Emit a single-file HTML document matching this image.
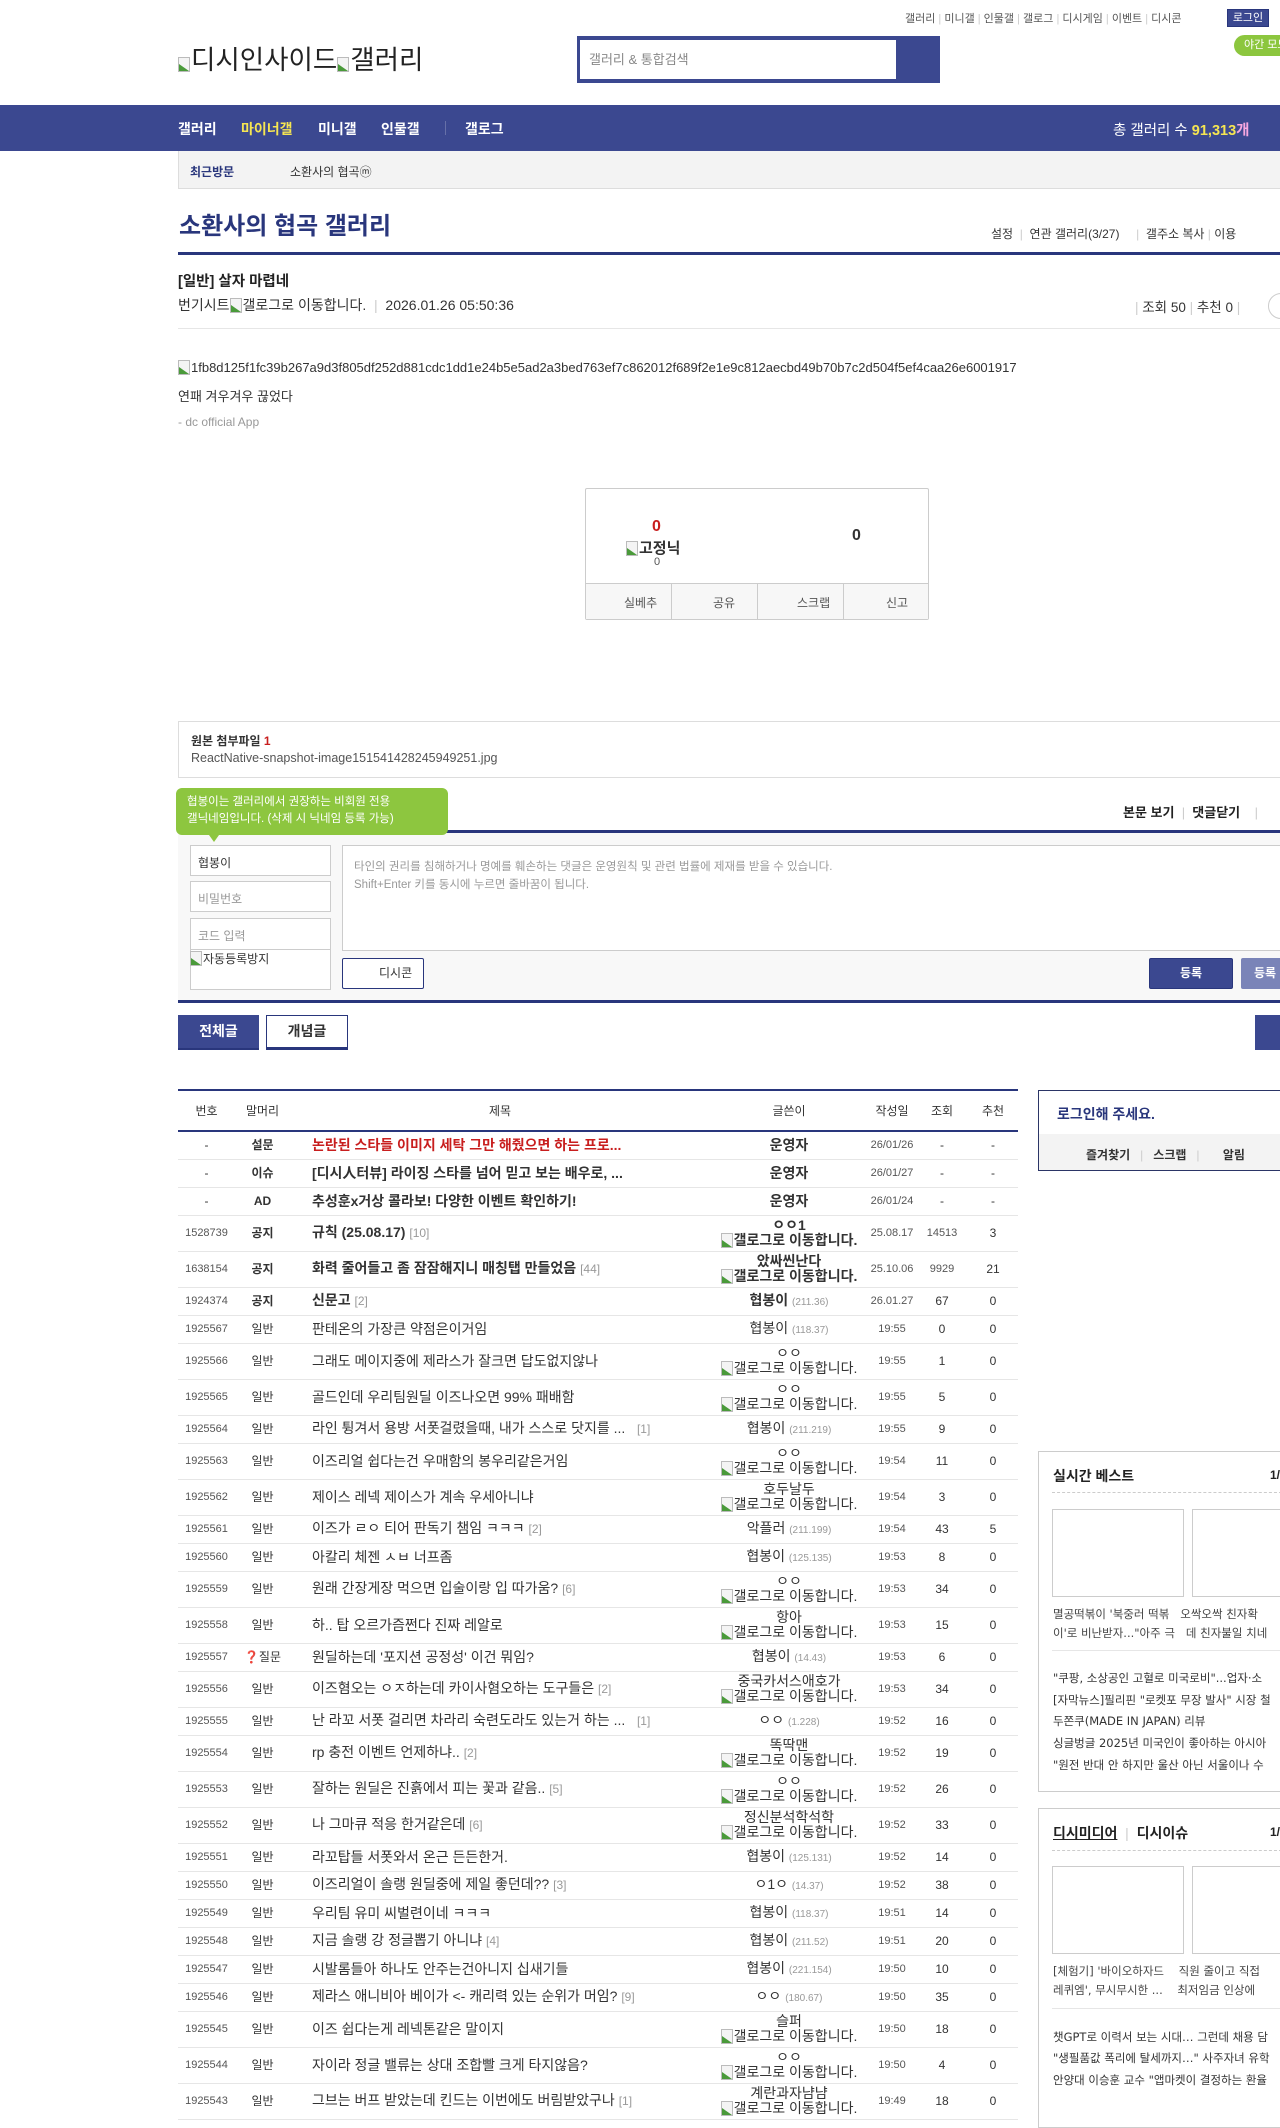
<!DOCTYPE html>
<html><head><meta charset="utf-8">
<style>
*{margin:0;padding:0;box-sizing:border-box}
body{width:1280px;height:2112px;position:relative;overflow:hidden;background:#fff;font-family:"Liberation Sans","Noto Sans CJK KR",sans-serif;color:#333;font-size:12px}
.a{position:absolute;white-space:nowrap}
.bi{display:inline-block;width:12px;height:15px;vertical-align:-3px;position:relative;border:1px solid #bbb;background:#f4f4f4;margin-right:1px}
.bi:after{content:"";position:absolute;left:0;bottom:0;width:0;height:0;border-left:10px solid #4a9a3a;border-top:7px solid transparent}
.nav span{color:#fff;font-weight:bold;font-size:14px}
table{border-collapse:collapse;table-layout:fixed;position:absolute;left:178px;top:1089px;width:840px}
td{border-bottom:1px solid #e6e6e6;text-align:center;font-size:12px;color:#333;line-height:15px;white-space:nowrap;overflow:hidden}
td.t{text-align:left;padding-left:22px;font-size:14px}
td.n{font-size:11px;color:#555}
tr.s td{height:28px}
tr.d td{height:36px}
.ip{color:#999;font-size:10px}
.rp{color:#999;font-size:12px}
.w{font-size:14px}
.gl{font-size:14px}
th{height:41px;font-weight:normal;font-size:12px;color:#333;border-top:2px solid #29367c;border-bottom:2px solid #29367c}
.sb{position:absolute;border:1px solid #ccc}
.th{position:absolute;border:1px solid #ccc;background:#fff}
.li{position:absolute;left:1053px;color:#333;white-space:nowrap;font-family:"DejaVu Sans","Noto Sans CJK KR",sans-serif;font-size:11.5px}
</style></head><body>

<!-- top links -->
<div class="a" style="left:905px;top:10px;font-size:11px;color:#555">갤러리 <span style="color:#ccc">|</span> 미니갤 <span style="color:#ccc">|</span> 인물갤 <span style="color:#ccc">|</span> 갤로그 <span style="color:#ccc">|</span> 디시게임 <span style="color:#ccc">|</span> 이벤트 <span style="color:#ccc">|</span> 디시콘</div>
<div class="a" style="left:1227px;top:9px;width:42px;height:18px;background:#3b4890;border:1px solid #29367c;color:#fff;font-size:11px;text-align:center;line-height:16px">로그인</div>
<div class="a" style="left:1234px;top:35px;width:60px;height:21px;background:#8cc63e;border-radius:11px;color:#fff;font-size:11px;line-height:21px;padding-left:10px">야간 모드</div>
<div class="a" style="left:178px;top:38px;font-size:26.5px;color:#222"><span class="bi"></span>디시인사이드<span class="bi"></span>갤러리</div>
<div class="a" style="left:577px;top:36px;width:363px;height:47px;background:#3b4890"></div>
<div class="a" style="left:580px;top:40px;width:316px;height:39px;background:#fff;font-size:13px;color:#888;line-height:39px;padding-left:9px">갤러리 &amp; 통합검색</div>

<!-- nav -->
<div class="a nav" style="left:0;top:105px;width:1280px;height:46px;background:#3b4890"></div>
<div class="a nav" style="left:178px;top:119px"><span>갤러리</span></div>
<div class="a nav" style="left:241px;top:119px"><span style="color:#f5e552">마이너갤</span></div>
<div class="a nav" style="left:318px;top:119px"><span>미니갤</span></div>
<div class="a nav" style="left:381px;top:119px"><span>인물갤</span></div>
<div class="a" style="left:445px;top:121px;width:1px;height:14px;background:#6670a8"></div>
<div class="a nav" style="left:465px;top:119px"><span>갤로그</span></div>
<div class="a" style="left:1113px;top:119px;color:#fff;font-size:14.5px">총 갤러리 수 <b style="color:#f5e552">91,313</b><b style="color:#f7a7e0">개</b></div>

<div class="a" style="left:178px;top:151px;width:1102px;height:38px;background:#f3f3f3;border-left:1px solid #ddd;border-bottom:1px solid #ddd"></div>
<div class="a" style="left:190px;top:163px;font-size:12px;font-weight:bold;color:#29367c">최근방문</div>
<div class="a" style="left:290px;top:163px;font-size:12px;color:#333">소환사의 협곡ⓜ</div>

<div class="a" style="left:179px;top:206px;font-size:24px;font-weight:bold;color:#29367c">소환사의 협곡 갤러리</div>
<div class="a" style="left:991px;top:225px;font-size:12px;color:#333">설정 <span style="color:#ccc">&nbsp;|&nbsp;</span> 연관 갤러리(3/27) <span style="color:#ccc">&nbsp;&nbsp;&nbsp;&nbsp;|&nbsp;</span> 갤주소 복사 <span style="color:#ccc">|</span> 이용</div>
<div class="a" style="left:178px;top:252px;width:1102px;height:3px;background:#29367c"></div>

<div class="a" style="left:178px;top:270px;font-size:14.5px;font-weight:bold;color:#222">[일반] 살자 마렵네</div>
<div class="a" style="left:178px;top:295px;font-size:14px;color:#333">번기시트<span class="bi"></span>갤로그로 이동합니다. <span style="color:#ccc">&nbsp;|&nbsp;</span> 2026.01.26 05:50:36</div>
<div class="a" style="left:1135px;top:296px;font-size:13.5px;color:#333"><span style="color:#ccc">|</span> 조회 50 <span style="color:#ccc">|</span> 추천 0 <span style="color:#ccc">|</span></div>
<div class="a" style="left:1268px;top:293px;width:26px;height:26px;border:1px solid #ccc;border-radius:13px"></div>
<div class="a" style="left:178px;top:328px;width:1102px;height:1px;background:#e6e6e6"></div>

<div class="a" style="left:178px;top:360px;font-size:13px;color:#333"><span class="bi"></span>1fb8d125f1fc39b267a9d3f805df252d881cdc1dd1e24b5e5ad2a3bed763ef7c862012f689f2e1e9c812aecbd49b70b7c2d504f5ef4caa26e6001917</div>
<div class="a" style="left:178px;top:386px;font-size:13px;color:#333">연패 겨우겨우 끊었다</div>
<div class="a" style="left:178px;top:415px;font-size:12px;color:#999">- dc official App</div>

<!-- recommend box -->
<div class="a" style="left:585px;top:488px;width:344px;height:132px;border:1px solid #ccc;border-radius:2px"></div>
<div class="a" style="left:652px;top:518px;font-size:16px;font-weight:bold;color:#c81e1e">0</div>
<div class="a" style="left:626px;top:537px;font-size:15px;font-weight:bold;color:#333"><span class="bi"></span>고정닉</div>
<div class="a" style="left:654px;top:556px;font-size:11px;color:#555">0</div>
<div class="a" style="left:852px;top:527px;font-size:16px;font-weight:bold;color:#333">0</div>
<div class="a" style="left:586px;top:583px;width:342px;height:36px;background:#f7f7f7;border-top:1px solid #ccc"></div>
<div class="a" style="left:671px;top:583px;width:1px;height:36px;background:#ccc"></div>
<div class="a" style="left:757px;top:583px;width:1px;height:36px;background:#ccc"></div>
<div class="a" style="left:843px;top:583px;width:1px;height:36px;background:#ccc"></div>
<div class="a" style="left:624px;top:594px;font-size:12px;color:#555">실베추</div>
<div class="a" style="left:713px;top:594px;font-size:12px;color:#555">공유</div>
<div class="a" style="left:797px;top:594px;font-size:12px;color:#555">스크랩</div>
<div class="a" style="left:886px;top:594px;font-size:12px;color:#555">신고</div>

<!-- attachment -->
<div class="a" style="left:178px;top:721px;width:1102px;height:57px;border:1px solid #ddd;border-right:none"></div>
<div class="a" style="left:191px;top:732px;font-size:12px;font-weight:bold;color:#333">원본 첨부파일 <span style="color:#c81e1e">1</span></div>
<div class="a" style="left:191px;top:751px;font-size:12.5px;color:#555">ReactNative-snapshot-image151541428245949251.jpg</div>

<!-- comment -->
<div class="a" style="left:430px;top:801px;font-size:14px;font-weight:bold;color:#333">순</div>
<div class="a" style="left:1123px;top:802px;font-size:13px;font-weight:bold;color:#222">본문 보기 <span style="color:#ccc;font-weight:normal">&nbsp;|&nbsp;</span> 댓글닫기 <span style="color:#ccc;font-weight:normal">&nbsp;&nbsp;&nbsp;|</span></div>
<div class="a" style="left:178px;top:830px;width:1102px;height:3px;background:#29367c"></div>
<div class="a" style="left:178px;top:833px;width:1102px;height:168px;background:#f8f8f8"></div>
<div class="a" style="left:176px;top:788px;width:272px;height:47px;background:#8dc63f;border-radius:6px;color:#fff;font-size:11.5px;line-height:17px;padding:6px 11px">협봉이는 갤러리에서 권장하는 비회원 전용<br>갤닉네임입니다. (삭제 시 닉네임 등록 가능)</div>
<div class="a" style="left:209px;top:835px;width:0;height:0;border-left:5px solid transparent;border-right:5px solid transparent;border-top:7px solid #8dc63f"></div>
<div class="a" style="left:190px;top:845px;width:141px;height:31px;background:#fff;border:1px solid #ccc;font-size:12px;color:#333;padding:8px 7px">협봉이</div>
<div class="a" style="left:190px;top:881px;width:141px;height:31px;background:#fff;border:1px solid #ccc;font-size:12px;color:#999;padding:8px 7px">비밀번호</div>
<div class="a" style="left:190px;top:918px;width:141px;height:72px;background:#fff;border:1px solid #ccc;font-size:12px;color:#999;padding:8px 7px">코드 입력</div>
<div class="a" style="left:190px;top:949px;width:141px;height:1px;background:#ccc"></div>
<div class="a" style="left:190px;top:950px;font-size:12px;color:#333"><span class="bi"></span>자동등록방지</div>
<div class="a" style="left:342px;top:845px;width:938px;height:106px;background:#fff;border:1px solid #ccc;border-right:none;font-size:11.5px;color:#999;padding:12px 11px;line-height:18px">타인의 권리를 침해하거나 명예를 훼손하는 댓글은 운영원칙 및 관련 법률에 제재를 받을 수 있습니다.<br>Shift+Enter 키를 동시에 누르면 줄바꿈이 됩니다.</div>
<div class="a" style="left:342px;top:958px;width:82px;height:31px;background:#fff;border:1px solid #29367c;border-radius:2px;font-size:12px;color:#333;line-height:29px;padding-left:36px">디시콘</div>
<div class="a" style="left:1149px;top:958px;width:84px;height:31px;background:#3b4890;border:1px solid #29367c;border-radius:2px;color:#fff;font-size:12px;font-weight:bold;text-align:center;line-height:29px">등록</div>
<div class="a" style="left:1241px;top:958px;width:50px;height:31px;background:#7a84b8;border-radius:2px;color:#fff;font-size:12px;font-weight:bold;line-height:31px;padding-left:13px">등록</div>
<div class="a" style="left:178px;top:1000px;width:1102px;height:3px;background:#29367c"></div>

<div class="a" style="left:178px;top:1015px;width:81px;height:35px;background:#3b4890;border-bottom:2px solid #29367c;color:#fff;font-size:14px;font-weight:bold;text-align:center;line-height:33px">전체글</div>
<div class="a" style="left:266px;top:1015px;width:82px;height:35px;background:#fff;border:1px solid #29367c;border-bottom:3px solid #29367c;color:#333;font-size:14px;font-weight:bold;text-align:center;line-height:30px">개념글</div>
<div class="a" style="left:1255px;top:1015px;width:30px;height:35px;background:#3b4890"></div>

<!-- table -->
<table>
<colgroup><col style="width:57px"><col style="width:55px"><col style="width:420px"><col style="width:158px"><col style="width:48px"><col style="width:52px"><col style="width:50px"></colgroup>
<tr><th>번호</th><th>말머리</th><th>제목</th><th>글쓴이</th><th>작성일</th><th>조회</th><th>추천</th></tr>
<tr class="s"><td>-</td><td><b>설문</b></td><td class="t" style="color:#c81e1e;font-weight:bold">논란된 스타들 이미지 세탁 그만 해줬으면 하는 프로...</td><td class="w"><b>운영자</b></td><td class="n">26/01/26</td><td>-</td><td>-</td></tr>
<tr class="s"><td>-</td><td><b>이슈</b></td><td class="t" style="font-weight:bold">[디시人터뷰] 라이징 스타를 넘어 믿고 보는 배우로, ...</td><td class="w"><b>운영자</b></td><td class="n">26/01/27</td><td>-</td><td>-</td></tr>
<tr class="s"><td>-</td><td><b>AD</b></td><td class="t" style="font-weight:bold">추성훈x거상 콜라보! 다양한 이벤트 확인하기!</td><td class="w"><b>운영자</b></td><td class="n">26/01/24</td><td>-</td><td>-</td></tr>
<tr class="d"><td class="n">1528739</td><td><b>공지</b></td><td class="t" style="font-weight:bold">규칙 (25.08.17) <span class="rp" style="font-weight:normal">[10]</span></td><td class="w"><b>ㅇㅇ1</b><br><span class="gl"><span class="bi"></span><b>갤로그로 이동합니다.</b></span></td><td class="n">25.08.17</td><td class="n">14513</td><td>3</td></tr>
<tr class="d"><td class="n">1638154</td><td><b>공지</b></td><td class="t" style="font-weight:bold">화력 줄어들고 좀 잠잠해지니 매칭탭 만들었음 <span class="rp" style="font-weight:normal">[44]</span></td><td class="w"><b>았싸씬난다</b><br><span class="gl"><span class="bi"></span><b>갤로그로 이동합니다.</b></span></td><td class="n">25.10.06</td><td class="n">9929</td><td>21</td></tr>
<tr class="s"><td class="n">1924374</td><td><b>공지</b></td><td class="t" style="font-weight:bold">신문고 <span class="rp" style="font-weight:normal">[2]</span></td><td class="w"><b>협봉이</b> <span class="ip">(211.36)</span></td><td class="n">26.01.27</td><td>67</td><td>0</td></tr>
<tr class="s"><td class="n">1925567</td><td>일반</td><td class="t">판테온의 가장큰 약점은이거임</td><td class="w">협봉이 <span class="ip">(118.37)</span></td><td class="n">19:55</td><td>0</td><td>0</td></tr>
<tr class="d"><td class="n">1925566</td><td>일반</td><td class="t">그래도 메이지중에 제라스가 잘크면 답도없지않나</td><td class="w">ㅇㅇ<br><span class="gl"><span class="bi"></span>갤로그로 이동합니다.</span></td><td class="n">19:55</td><td>1</td><td>0</td></tr>
<tr class="d"><td class="n">1925565</td><td>일반</td><td class="t">골드인데 우리팀원딜 이즈나오면 99% 패배함</td><td class="w">ㅇㅇ<br><span class="gl"><span class="bi"></span>갤로그로 이동합니다.</span></td><td class="n">19:55</td><td>5</td><td>0</td></tr>
<tr class="s"><td class="n">1925564</td><td>일반</td><td class="t">라인 튕겨서 용방 서폿걸렸을때, 내가 스스로 닷지를 ... &nbsp;&nbsp;<span class="rp">[1]</span></td><td class="w">협봉이 <span class="ip">(211.219)</span></td><td class="n">19:55</td><td>9</td><td>0</td></tr>
<tr class="d"><td class="n">1925563</td><td>일반</td><td class="t">이즈리얼 쉽다는건 우매함의 봉우리같은거임</td><td class="w">ㅇㅇ<br><span class="gl"><span class="bi"></span>갤로그로 이동합니다.</span></td><td class="n">19:54</td><td>11</td><td>0</td></tr>
<tr class="d"><td class="n">1925562</td><td>일반</td><td class="t">제이스 레넥 제이스가 계속 우세아니냐</td><td class="w">호두날두<br><span class="gl"><span class="bi"></span>갤로그로 이동합니다.</span></td><td class="n">19:54</td><td>3</td><td>0</td></tr>
<tr class="s"><td class="n">1925561</td><td>일반</td><td class="t">이즈가 ㄹㅇ 티어 판독기 챔임 ㅋㅋㅋ <span class="rp">[2]</span></td><td class="w">악플러 <span class="ip">(211.199)</span></td><td class="n">19:54</td><td>43</td><td>5</td></tr>
<tr class="s"><td class="n">1925560</td><td>일반</td><td class="t">아칼리 체젠 ㅅㅂ 너프좀</td><td class="w">협봉이 <span class="ip">(125.135)</span></td><td class="n">19:53</td><td>8</td><td>0</td></tr>
<tr class="d"><td class="n">1925559</td><td>일반</td><td class="t">원래 간장게장 먹으면 입술이랑 입 따가움? <span class="rp">[6]</span></td><td class="w">ㅇㅇ<br><span class="gl"><span class="bi"></span>갤로그로 이동합니다.</span></td><td class="n">19:53</td><td>34</td><td>0</td></tr>
<tr class="d"><td class="n">1925558</td><td>일반</td><td class="t">하.. 탑 오르가즘쩐다 진짜 레알로</td><td class="w">항아<br><span class="gl"><span class="bi"></span>갤로그로 이동합니다.</span></td><td class="n">19:53</td><td>15</td><td>0</td></tr>
<tr class="s"><td class="n">1925557</td><td><span style="color:#d33">❓</span>질문</td><td class="t">원딜하는데 '포지션 공정성' 이건 뭐임?</td><td class="w">협봉이 <span class="ip">(14.43)</span></td><td class="n">19:53</td><td>6</td><td>0</td></tr>
<tr class="d"><td class="n">1925556</td><td>일반</td><td class="t">이즈혐오는 ㅇㅈ하는데 카이사혐오하는 도구들은 <span class="rp">[2]</span></td><td class="w">중국카서스애호가<br><span class="gl"><span class="bi"></span>갤로그로 이동합니다.</span></td><td class="n">19:53</td><td>34</td><td>0</td></tr>
<tr class="s"><td class="n">1925555</td><td>일반</td><td class="t">난 라꼬 서폿 걸리면 차라리 숙련도라도 있는거 하는 ... &nbsp;&nbsp;<span class="rp">[1]</span></td><td class="w">ㅇㅇ <span class="ip">(1.228)</span></td><td class="n">19:52</td><td>16</td><td>0</td></tr>
<tr class="d"><td class="n">1925554</td><td>일반</td><td class="t">rp 충전 이벤트 언제하냐.. <span class="rp">[2]</span></td><td class="w">똑딱맨<br><span class="gl"><span class="bi"></span>갤로그로 이동합니다.</span></td><td class="n">19:52</td><td>19</td><td>0</td></tr>
<tr class="d"><td class="n">1925553</td><td>일반</td><td class="t">잘하는 원딜은 진흙에서 피는 꽃과 같음.. <span class="rp">[5]</span></td><td class="w">ㅇㅇ<br><span class="gl"><span class="bi"></span>갤로그로 이동합니다.</span></td><td class="n">19:52</td><td>26</td><td>0</td></tr>
<tr class="d"><td class="n">1925552</td><td>일반</td><td class="t">나 그마큐 적응 한거같은데 <span class="rp">[6]</span></td><td class="w">정신분석학석학<br><span class="gl"><span class="bi"></span>갤로그로 이동합니다.</span></td><td class="n">19:52</td><td>33</td><td>0</td></tr>
<tr class="s"><td class="n">1925551</td><td>일반</td><td class="t">라꼬탑들 서폿와서 온근 든든한거.</td><td class="w">협봉이 <span class="ip">(125.131)</span></td><td class="n">19:52</td><td>14</td><td>0</td></tr>
<tr class="s"><td class="n">1925550</td><td>일반</td><td class="t">이즈리얼이 솔랭 원딜중에 제일 좋던데?? <span class="rp">[3]</span></td><td class="w">ㅇ1ㅇ <span class="ip">(14.37)</span></td><td class="n">19:52</td><td>38</td><td>0</td></tr>
<tr class="s"><td class="n">1925549</td><td>일반</td><td class="t">우리팀 유미 씨벌련이네 ㅋㅋㅋ</td><td class="w">협봉이 <span class="ip">(118.37)</span></td><td class="n">19:51</td><td>14</td><td>0</td></tr>
<tr class="s"><td class="n">1925548</td><td>일반</td><td class="t">지금 솔랭 강 정글뽑기 아니냐 <span class="rp">[4]</span></td><td class="w">협봉이 <span class="ip">(211.52)</span></td><td class="n">19:51</td><td>20</td><td>0</td></tr>
<tr class="s"><td class="n">1925547</td><td>일반</td><td class="t">시발롬들아 하나도 안주는건아니지 십새기들</td><td class="w">협봉이 <span class="ip">(221.154)</span></td><td class="n">19:50</td><td>10</td><td>0</td></tr>
<tr class="s"><td class="n">1925546</td><td>일반</td><td class="t">제라스 애니비아 베이가 &lt;- 캐리력 있는 순위가 머임? <span class="rp">[9]</span></td><td class="w">ㅇㅇ <span class="ip">(180.67)</span></td><td class="n">19:50</td><td>35</td><td>0</td></tr>
<tr class="d"><td class="n">1925545</td><td>일반</td><td class="t">이즈 쉽다는게 레넥톤같은 말이지</td><td class="w">슬퍼<br><span class="gl"><span class="bi"></span>갤로그로 이동합니다.</span></td><td class="n">19:50</td><td>18</td><td>0</td></tr>
<tr class="d"><td class="n">1925544</td><td>일반</td><td class="t">자이라 정글 밸류는 상대 조합빨 크게 타지않음?</td><td class="w">ㅇㅇ<br><span class="gl"><span class="bi"></span>갤로그로 이동합니다.</span></td><td class="n">19:50</td><td>4</td><td>0</td></tr>
<tr class="d"><td class="n">1925543</td><td>일반</td><td class="t">그브는 버프 받았는데 킨드는 이번에도 버림받았구나 <span class="rp">[1]</span></td><td class="w">계란과자냠냠<br><span class="gl"><span class="bi"></span>갤로그로 이동합니다.</span></td><td class="n">19:49</td><td>18</td><td>0</td></tr>
</table>

<!-- sidebar login -->
<div class="a" style="left:1038px;top:1090px;width:250px;height:81px;border:1px solid #2b3566"></div>
<div class="a" style="left:1039px;top:1134px;width:245px;height:36px;background:#f3f3f3"></div>
<div class="a" style="left:1057px;top:1104px;font-size:14px;font-weight:bold;color:#29367c">로그인해 주세요.</div>
<div class="a" style="left:1086px;top:1146px;font-size:12px;font-weight:bold;color:#333">즐겨찾기 <span style="color:#ccc;font-weight:normal">&nbsp;&nbsp;|&nbsp;&nbsp;</span> 스크랩 <span style="color:#ccc;font-weight:normal">&nbsp;&nbsp;|&nbsp;&nbsp;&nbsp;&nbsp;&nbsp;&nbsp;</span> 알림</div>

<!-- best box -->
<div class="sb" style="left:1038px;top:1451px;width:250px;height:341px"></div>
<div class="a" style="left:1053px;top:1466px;font-size:14px;font-weight:bold;color:#222">실시간 베스트</div>
<div class="a" style="left:1270px;top:1468px;font-size:12px;font-weight:bold;color:#222">1/</div>
<div class="a" style="left:1052px;top:1492px;width:230px;border-top:1px dashed #ccc"></div>
<div class="th" style="left:1052px;top:1509px;width:132px;height:88px"></div>
<div class="th" style="left:1192px;top:1509px;width:132px;height:88px"></div>
<div class="li" style="top:1606px;color:#444">멸공떡볶이 '북중러 떡볶&nbsp;&nbsp; 오싹오싹 친자확</div>
<div class="li" style="top:1625px;color:#444">이'로 비난받자..."아주 극&nbsp;&nbsp; 데 친자불일 치네</div>
<div class="a" style="left:1052px;top:1650px;width:230px;border-top:1px solid #e6e6e6"></div>
<div class="li" style="top:1670px">"쿠팡, 소상공인 고혈로 미국로비"...업자·소</div>
<div class="li" style="top:1692px">[자막뉴스]필리핀 "로켓포 무장 발사" 시장 철</div>
<div class="li" style="top:1713px">두쫀쿠(MADE IN JAPAN) 리뷰</div>
<div class="li" style="top:1735px">싱글벙글 2025년 미국인이 좋아하는 아시아</div>
<div class="li" style="top:1757px">"원전 반대 안 하지만 울산 아닌 서울이나 수</div>

<!-- media box -->
<div class="sb" style="left:1038px;top:1808px;width:250px;height:320px"></div>
<div class="a" style="left:1053px;top:1823px;font-size:14px;font-weight:bold;color:#222"><u>디시미디어</u> <span style="color:#ccc;font-weight:normal">&nbsp;|&nbsp;</span> 디시이슈</div>
<div class="a" style="left:1270px;top:1825px;font-size:12px;font-weight:bold;color:#222">1/</div>
<div class="a" style="left:1052px;top:1850px;width:230px;border-top:1px dashed #ccc"></div>
<div class="th" style="left:1052px;top:1866px;width:132px;height:88px"></div>
<div class="th" style="left:1192px;top:1866px;width:132px;height:88px"></div>
<div class="li" style="top:1963px;color:#444">[체험기] '바이오하자드&nbsp;&nbsp;&nbsp; 직원 줄이고 직접</div>
<div class="li" style="top:1982px;color:#444">레퀴엠', 무시무시한 ...&nbsp;&nbsp;&nbsp; 최저임금 인상에</div>
<div class="a" style="left:1052px;top:2008px;width:230px;border-top:1px solid #e6e6e6"></div>
<div class="li" style="top:2029px">챗GPT로 이력서 보는 시대… 그런데 채용 담</div>
<div class="li" style="top:2050px">"생필품값 폭리에 탈세까지…" 사주자녀 유학</div>
<div class="li" style="top:2072px">안양대 이승훈 교수 "앱마켓이 결정하는 환율</div>

</body></html>
